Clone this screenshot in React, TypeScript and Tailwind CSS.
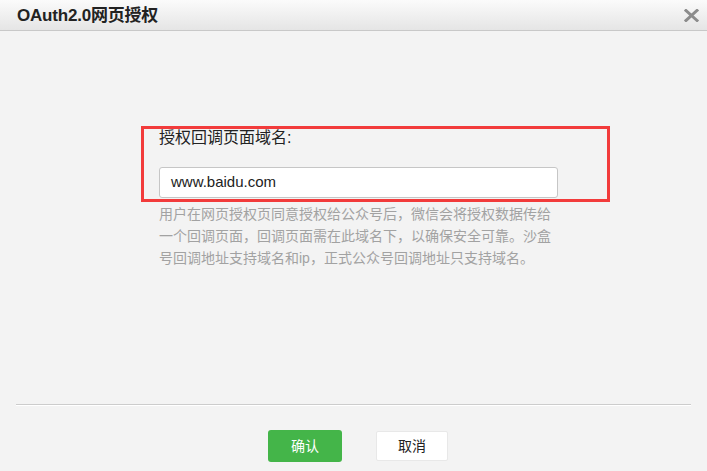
import React from 'react';

const font = { fontFamily: '"Liberation Sans", "Noto Sans CJK SC", sans-serif' };

function CloseIcon() {
  return (
    <svg width="15" height="13" viewBox="0 0 15 13" className="text-[#8c8c8c]">
      <path d="M2 1.5 L13 11.5 M13 1.5 L2 11.5" stroke="currentColor" strokeWidth="3" strokeLinecap="square" />
    </svg>
  );
}

export default function App() {
  return (
    <div className="w-[707px] h-[471px] bg-[#f3f3f3] overflow-hidden" style={font}>
      {/* header */}
      <div className="h-[31px] flex items-center justify-between pl-[17px] pr-[8px] border-b border-[#c8c8c8] bg-gradient-to-b from-[#fbfbfb] to-[#e5e5e5]">
        <span className="text-[17px] font-bold text-[#222] leading-none tracking-[-0.2px]">OAuth2.0网页授权</span>
        <CloseIcon />
      </div>

      {/* body */}
      <div className="h-[373px] pt-[95px] pl-[141px]">
        <div className="w-[469px] border-[3px] border-[#f23b3b] pl-[15px] pb-[1px]">
          <div className="text-[16px] leading-[18px] text-[#222]">授权回调页面域名:</div>
          <div className="mt-[20px] w-[399px] h-[31px] bg-white border border-[#c6c6c6] rounded-[3px] flex items-center pl-[11px] text-[15px] text-[#222]">
            www.baidu.com
          </div>
        </div>
        <p className="mt-[1px] ml-[18px] w-[400px] text-[14px] leading-[22px] text-[#a2a2a2]">
          用户在网页授权页同意授权给公众号后，微信会将授权数据传给一个回调页面，回调页面需在此域名下，以确保安全可靠。沙盒号回调地址支持域名和ip，正式公众号回调地址只支持域名。
        </p>
      </div>

      {/* divider */}
      <div className="mx-[16px] h-[2px] border-t border-[#cccccc] bg-white"></div>

      {/* footer */}
      <div className="flex justify-center gap-[34px] pt-[24px] pl-[9px]">
        <button className="w-[74px] h-[32px] rounded-[3px] bg-[#44b549] text-white text-[14px]">确认</button>
        <button className="w-[72px] h-[30px] mt-[1px] rounded-[2px] bg-white border border-[#e8e8e8] text-[#222] text-[14px]">取消</button>
      </div>
    </div>
  );
}
